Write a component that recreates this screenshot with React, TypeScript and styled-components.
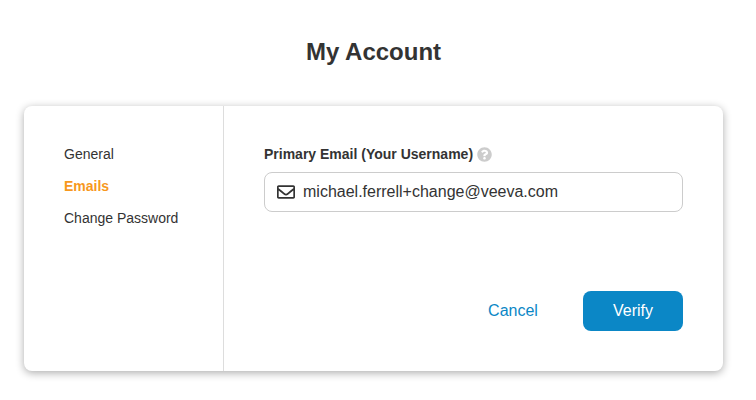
import React, { useState } from "react";
import styled, { createGlobalStyle } from "styled-components";
import { FaQuestionCircle, FaRegEnvelope } from "react-icons/fa";

const GlobalStyle = createGlobalStyle`
  *, *::before, *::after { box-sizing: border-box; }
  body {
    margin: 0;
    background: #fff;
    color: #333;
    font: 14px/20px "Liberation Sans", Arial, sans-serif;
  }
`;

const Page = styled.main`
  display: flex;
  flex-direction: column;
  gap: 38px;
  padding: 36px 33px 28px 24px;
`;

const Title = styled.h1`
  margin: 0;
  font-size: 24px;
  line-height: 32px;
  font-weight: 700;
  text-align: center;
`;

const Card = styled.section`
  display: flex;
  border-radius: 8px;
  background: #fff;
  box-shadow: 0 2px 8px rgba(0, 0, 0, 0.33);
`;

const SideNav = styled.nav`
  flex: 0 0 200px;
  display: flex;
  flex-direction: column;
  align-items: flex-start;
  gap: 12px;
  padding: 38px 20px 40px 40px;
  border-right: 1px solid #ddd;
`;

const NavLink = styled.a<{ $active?: boolean }>`
  color: ${(p) => (p.$active ? "#f7981d" : "#333")};
  font-weight: ${(p) => (p.$active ? 700 : 400)};
  text-decoration: none;
`;

const Form = styled.form`
  flex: 1;
  min-width: 0;
  display: flex;
  flex-direction: column;
  padding: 38px 40px 40px;
`;

const LabelRow = styled.div`
  display: flex;
  align-items: center;
  gap: 4px;
  margin-bottom: 8px;
`;

const Label = styled.label`
  font-weight: 700;
`;

const HelpButton = styled.button`
  display: flex;
  padding: 0;
  border: 0;
  background: none;
  color: #ccc;
  font-size: 15px;
  cursor: pointer;
`;

const Field = styled.div`
  display: flex;
  align-items: center;
  gap: 8px;
  height: 40px;
  padding: 0 12px;
  border: 1px solid #ccc;
  border-radius: 8px;
  font-size: 18px;
`;

const EmailInput = styled.input`
  flex: 1;
  min-width: 0;
  padding: 0;
  border: 0;
  outline: 0;
  background: transparent;
  color: inherit;
  font: inherit;
  font-size: 16px;
`;

const Actions = styled.div`
  display: flex;
  justify-content: flex-end;
  gap: 20px;
  margin-top: 79px;
`;

const Button = styled.button<{ $primary?: boolean }>`
  min-width: 100px;
  height: 40px;
  padding: 0 20px;
  border: 0;
  border-radius: 8px;
  background: ${(p) => (p.$primary ? "#0b87c6" : "transparent")};
  color: ${(p) => (p.$primary ? "#fff" : "#0b87c6")};
  font: inherit;
  font-size: 16px;
  cursor: pointer;
`;

const sections = ["General", "Emails", "Change Password"];

export default function App() {
  const [email, setEmail] = useState("michael.ferrell+change@veeva.com");
  return (
    <>
      <GlobalStyle />
      <Page>
        <Title>My Account</Title>
        <Card>
          <SideNav aria-label="Account sections">
            {sections.map((name) => (
              <NavLink
                key={name}
                href="#"
                $active={name === "Emails"}
                aria-current={name === "Emails" ? "page" : undefined}
              >
                {name}
              </NavLink>
            ))}
          </SideNav>
          <Form onSubmit={(e) => e.preventDefault()}>
            <LabelRow>
              <Label htmlFor="email">Primary Email (Your Username)</Label>
              <HelpButton type="button" aria-label="Help">
                <FaQuestionCircle />
              </HelpButton>
            </LabelRow>
            <Field>
              <FaRegEnvelope aria-hidden="true" />
              <EmailInput
                id="email"
                type="email"
                value={email}
                onChange={(e) => setEmail(e.target.value)}
              />
            </Field>
            <Actions>
              <Button type="button">Cancel</Button>
              <Button type="submit" $primary>
                Verify
              </Button>
            </Actions>
          </Form>
        </Card>
      </Page>
    </>
  );
}
